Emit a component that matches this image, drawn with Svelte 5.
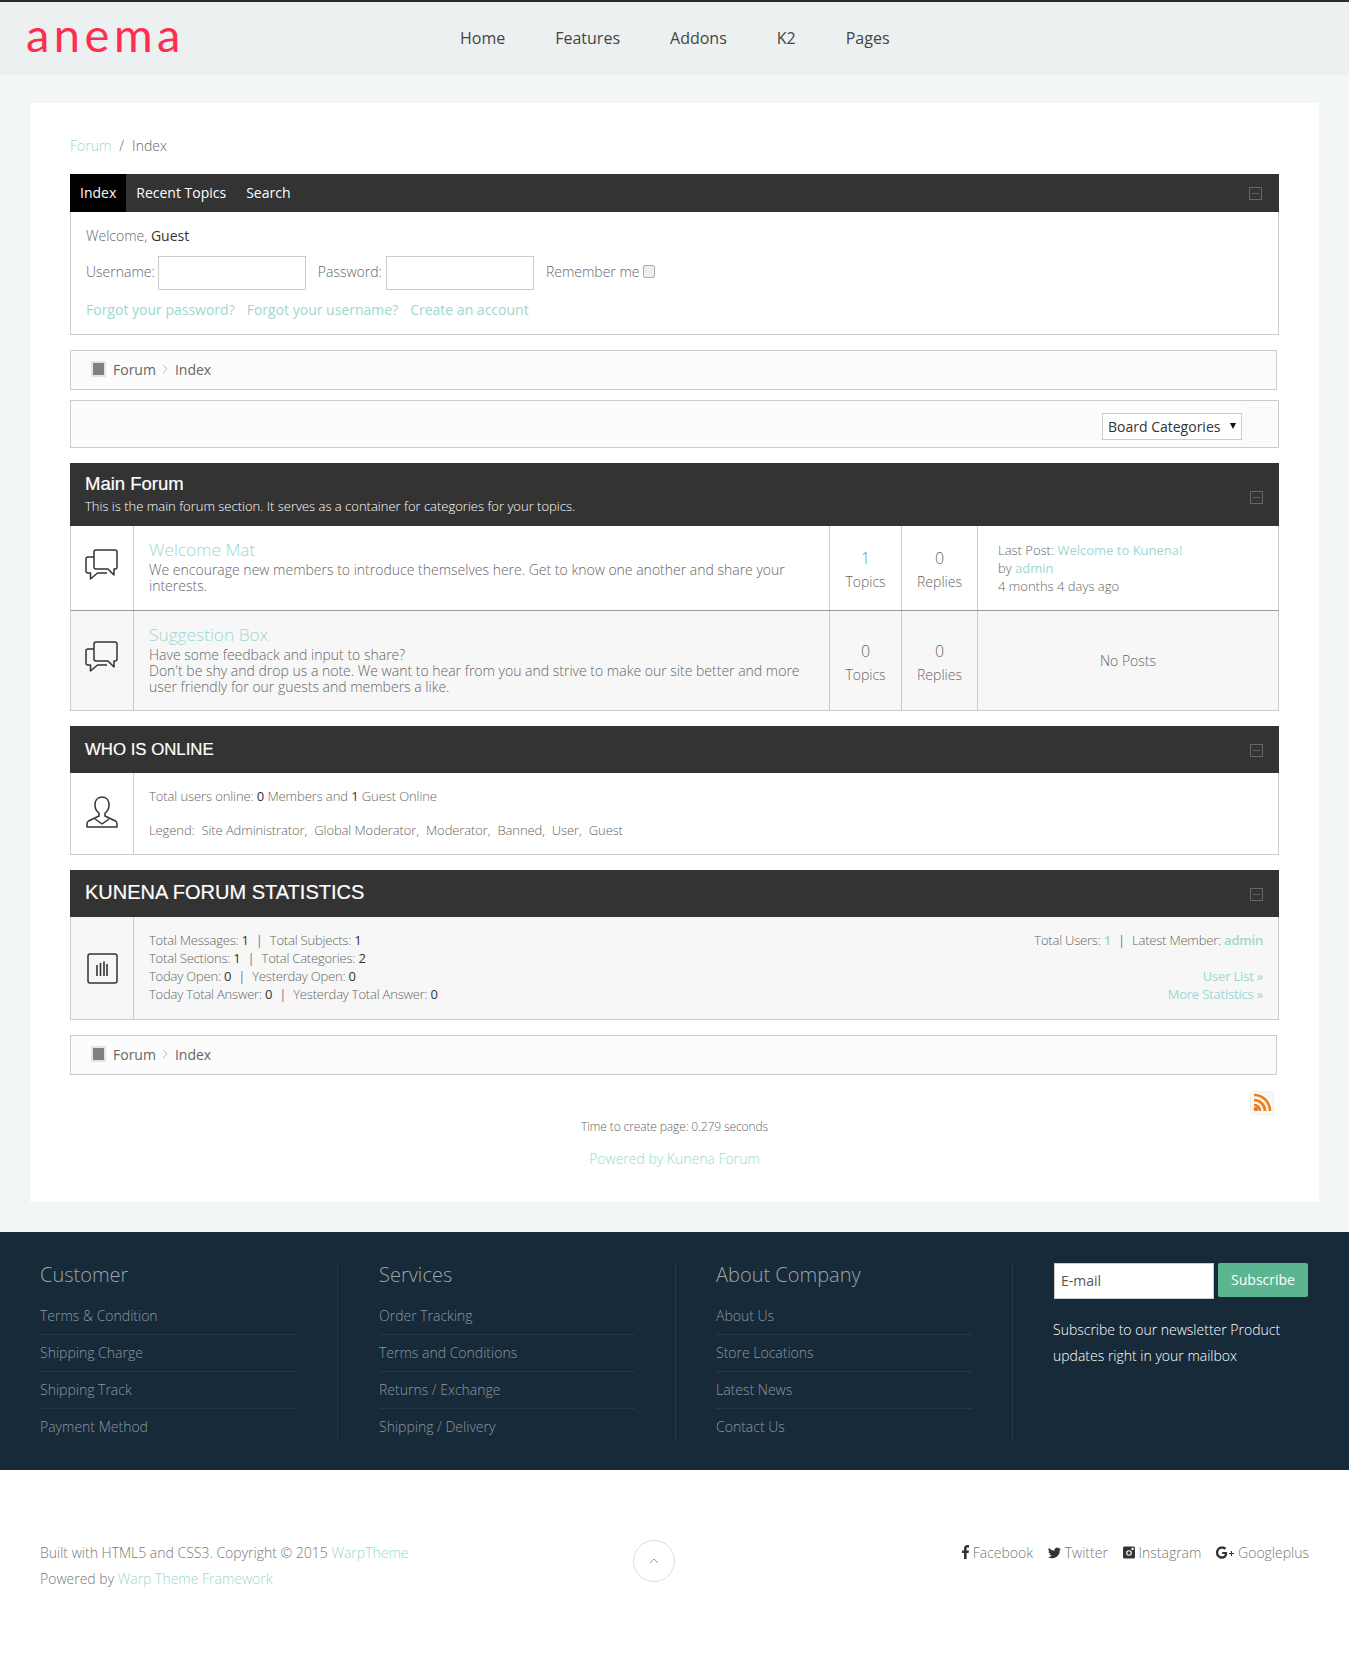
<script lang="ts">
	const nav = ['Home', 'Features', 'Addons', 'K2', 'Pages'];

	const columns = [
		{ title: 'Customer', links: ['Terms & Condition', 'Shipping Charge', 'Shipping Track', 'Payment Method'] },
		{ title: 'Services', links: ['Order Tracking', 'Terms and Conditions', 'Returns / Exchange', 'Shipping / Delivery'] },
		{ title: 'About Company', links: ['About Us', 'Store Locations', 'Latest News', 'Contact Us'] }
	];

	const legend = ['Site Administrator', 'Global Moderator', 'Moderator', 'Banned', 'User', 'Guest'];

	const stats = [
		[['Total Messages', '1'], ['Total Subjects', '1']],
		[['Total Sections', '1'], ['Total Categories', '2']],
		[['Today Open', '0'], ['Yesterday Open', '0']],
		[['Today Total Answer', '0'], ['Yesterday Total Answer', '0']]
	];
</script>

{#snippet collapse()}
	<span class="collapse"></span>
{/snippet}

{#snippet crumbs()}
	<div class="crumbs">
		<span class="crumb-icon"></span>
		<span>Forum</span>
		<svg class="crumb-sep" width="6" height="10" viewBox="0 0 6 10"><path d="M1 1l4 4-4 4" fill="none" stroke="#bbb" /></svg>
		<span>Index</span>
	</div>
{/snippet}

{#snippet chat()}
	<svg class="chat" width="33" height="31" viewBox="0 0 33 31" fill="none" stroke="#333" stroke-width="1.5" stroke-linejoin="round">
		<path d="M11 1h19a2 2 0 0 1 2 2v15a2 2 0 0 1-2 2h-1v6l-6-6H11a2 2 0 0 1-2-2V3a2 2 0 0 1 2-2z" />
		<path d="M9 8H3a2 2 0 0 0-2 2v12a2 2 0 0 0 2 2h2.500v6l7-6H22" />
	</svg>
{/snippet}

<header class="top">
	<div class="logo">anema</div>
	<nav>
		{#each nav as item}
			<span>{item}</span>
		{/each}
	</nav>
</header>

<main class="wrap">
	<div class="box">
		<div class="path"><a href="#f">Forum</a><span class="slash">/</span><span>Index</span></div>

		<section class="panel login">
			<div class="tabs">
				<span class="tab active">Index</span>
				<span class="tab">Recent Topics</span>
				<span class="tab">Search</span>
				{@render collapse()}
			</div>
			<div class="login-body">
				<p>Welcome, <b>Guest</b></p>
				<div class="fields">
					<label for="u">Username:</label>
					<input id="u" type="text" />
					<label class="second" for="p">Password:</label>
					<input id="p" type="password" />
					<label class="second" for="r">Remember me</label>
					<input id="r" class="check" type="checkbox" />
				</div>
				<div class="login-links">
					<a href="#f">Forgot your password?</a>
					<a href="#f">Forgot your username?</a>
					<a href="#f">Create an account</a>
				</div>
			</div>
		</section>

		{@render crumbs()}

		<div class="selector">
			<div class="select">Board Categories<span class="caret"></span></div>
			<span class="go"></span>
		</div>

		<section class="panel">
			<div class="bar bar-main">
				<div class="bar-text">
					<h2>Main Forum</h2>
					<p>This is the main forum section. It serves as a container for categories for your topics.</p>
				</div>
				{@render collapse()}
			</div>
			<div class="row">
				<div class="cell-icon">{@render chat()}</div>
				<div class="cell-main">
					<a class="cat" href="#f">Welcome Mat</a>
					<p>We encourage new members to introduce themselves here. Get to know one another and share your interests.</p>
				</div>
				<div class="cell-num"><strong class="num teal">1</strong><span>Topics</span></div>
				<div class="cell-num"><strong class="num">0</strong><span>Replies</span></div>
				<div class="cell-last">
					<div>Last Post: <a href="#f">Welcome to Kunena!</a></div>
					<div>by <a href="#f">admin</a></div>
					<div>4 months 4 days ago</div>
				</div>
			</div>
			<div class="row alt">
				<div class="cell-icon">{@render chat()}</div>
				<div class="cell-main">
					<a class="cat" href="#f">Suggestion Box</a>
					<p>Have some feedback and input to share?<br />Don't be shy and drop us a note. We want to hear from you and strive to make our site better and more user friendly for our guests and members a like.</p>
				</div>
				<div class="cell-num"><strong class="num">0</strong><span>Topics</span></div>
				<div class="cell-num"><strong class="num">0</strong><span>Replies</span></div>
				<div class="cell-last none">No Posts</div>
			</div>
		</section>

		<section class="panel">
			<div class="bar bar-small">
				<h2>WHO IS ONLINE</h2>
				{@render collapse()}
			</div>
			<div class="row simple">
				<div class="cell-icon">
					<svg class="user" width="32" height="32" viewBox="0 0 32 32" fill="none" stroke="#333" stroke-width="1.5" stroke-linejoin="round">
						<path d="M16 1c-5 0-7 4-7 8 0 3 1 6 4 8v3L2.500 25q-1.500 1-1.500 3v3h30v-3q0-2-1.500-3L19 20v-3c3-2 4-5 4-8 0-4-2-8-7-8z" />
						<path d="M9 23l7 5 7-5" />
					</svg>
				</div>
				<div class="online">
					<div>Total users online: <b>0</b> Members and <b>1</b> Guest Online</div>
					<div class="legend">
						<span>Legend:</span>
						{#each legend as name, i}
							<span>{name}{i < legend.length - 1 ? ',' : ''}</span>
						{/each}
					</div>
				</div>
			</div>
		</section>

		<section class="panel">
			<div class="bar bar-small">
				<h2 class="big">KUNENA FORUM STATISTICS</h2>
				{@render collapse()}
			</div>
			<div class="row simple alt">
				<div class="cell-icon">
					<svg width="31" height="31" viewBox="0 0 31 31">
						<rect x="1" y="1" width="29" height="29" rx="2" fill="none" stroke="#333" stroke-width="1.500" />
						<path d="M10 12v11M13.500 10v13M17 8.500v14.500M20 11v12" stroke="#333" stroke-width="1.600" />
					</svg>
				</div>
				<div class="stats">
					<div>
						{#each stats as line}
							<div>
								{line[0][0]}: <b>{line[0][1]}</b><span class="pipe">|</span>{line[1][0]}: <b>{line[1][1]}</b>
							</div>
						{/each}
					</div>
					<div class="stats-right">
						<div>Total Users: <a class="member" href="#f">1</a><span class="pipe">|</span>Latest Member: <a class="member" href="#f">admin</a></div>
						<div class="spacer"></div>
						<div><a href="#f">User List »</a></div>
						<div><a href="#f">More Statistics »</a></div>
					</div>
				</div>
			</div>
		</section>

		{@render crumbs()}

		<div class="rss">
			<svg width="24" height="24" viewBox="0 0 24 24">
				<rect x=".5" y=".5" width="23" height="23" rx="3" fill="#f8f8f8" stroke="#eee" />
				<g fill="none" stroke="#f57c14" stroke-width="2.600">
					<path d="M4 4c9 0 16 7 16 16" />
					<path d="M4 9c6 0 11 5 11 11" />
					<path d="M4 14c3.500 0 6 2.500 6 6" />
				</g>
				<circle cx="6" cy="18" r="2.300" fill="#f57c14" />
			</svg>
		</div>
		<div class="time">Time to create page: 0.279 seconds</div>
		<div class="powered"><a href="#f">Powered by Kunena Forum</a></div>
	</div>
</main>

<footer class="foot">
	{#each columns as col}
		<div class="foot-col">
			<h3>{col.title}</h3>
			<ul>
				{#each col.links as link}
					<li>{link}</li>
				{/each}
			</ul>
		</div>
	{/each}
	<div class="news">
		<div class="news-form">
			<input type="text" placeholder="E-mail" />
			<button>Subscribe</button>
		</div>
		<p>Subscribe to our newsletter Product updates right in your mailbox</p>
	</div>
</footer>

<div class="bottom">
	<div class="copy">
		<div>Built with HTML5 and CSS3. Copyright © 2015 <a href="#f">WarpTheme</a></div>
		<div>Powered by <a href="#f">Warp Theme Framework</a></div>
	</div>
	<div class="totop">
		<svg width="10" height="6" viewBox="0 0 10 6"><path d="M1 5l4-4 4 4" fill="none" stroke="#999" /></svg>
	</div>
	<div class="social">
		<span>
			<svg width="7" height="14" viewBox="0 0 7 14"><path d="M2 14V8H0V5.500h2V3.700C2 1.300 3.300 0 5.400 0H7v2.500H5.800c-.9 0-1.200.4-1.200 1.200v1.800H7L6.600 8h-2v6z" fill="#333" /></svg>
			Facebook
		</span>
		<span>
			<svg width="13" height="12" viewBox="0 0 24 20"><path d="M24 2.400a10 10 0 0 1-2.800.8A5 5 0 0 0 23.300.500a10 10 0 0 1-3.100 1.200A4.900 4.900 0 0 0 11.800 6 14 14 0 0 1 1.700 .900a4.900 4.900 0 0 0 1.500 6.600 4.900 4.900 0 0 1-2.200-.6c0 2.400 1.700 4.400 3.900 4.900a5 5 0 0 1-2.200.1 4.900 4.900 0 0 0 4.600 3.400A9.900 9.900 0 0 1 0 17.300 14 14 0 0 0 21.600 5q1.500-1.100 2.400-2.600z" fill="#333" /></svg>
			Twitter
		</span>
		<span>
			<svg width="12" height="13" viewBox="0 0 12 12"><rect width="12" height="12" rx="1.500" fill="#333" /><circle cx="6" cy="6.500" r="2.800" fill="#fff" /><circle cx="6" cy="6.500" r="1.700" fill="#333" /><rect x="8.500" y="1.300" width="2.200" height="2.200" fill="#fff" /></svg>
			Instagram
		</span>
		<span>
			<svg width="18" height="13" viewBox="0 0 18 13"><path d="M11 6H6.200v2H9a3 3 0 0 1-2.900 2.300A3.800 3.800 0 0 1 6.100 2.700c1 0 1.800.4 2.400 1l1.700-1.700A6.200 6.200 0 1 0 6.200 12.800c3.300 0 5-2.400 5-5.500z" fill="#333" /><path d="M15 5v2h-2v1h2v2h1V8h2V7h-2V5z" fill="#333" /></svg>
			Googleplus
		</span>
	</div>
</div>

<style>
	:global(body) {
		margin: 0;
		background: #fff;
		font-family: "Open Sans", sans-serif;
		font-weight: 300;
		font-size: 14px;
		color: #666;
	}

	a { color: #9cd8d1; text-decoration: none; font-weight: 400; }
	b { font-weight: 400; color: #333; }
	p { margin: 0; }

	.top {
		display: flex;
		align-items: center;
		height: 73px;
		border-top: 2px solid #2a2a2a;
		background: #ecf0f1;
		padding-left: 26px;
	}

	.logo {
		width: 434px;
		font-family: Lato, sans-serif;
		font-weight: 400;
		font-size: 47px;
		letter-spacing: 4.500px;
		line-height: 44px;
		color: #ff2d4f;
		margin-top: -9px;
	}

	nav { display: flex; gap: 50px; font-size: 16px; color: #444; font-weight: 400; padding-bottom: 2px; }

	.wrap {
		background: #f3f6f7;
		padding: 28px 30px 30px;
	}

	.box {
		background: #fff;
		padding: 33px 40px 33px;
		height: 1099px;
		box-sizing: border-box;
	}

	.path { line-height: 20px; margin-bottom: 18px; display: flex; }
	.path a { font-weight: 300; }
	.slash { margin: 0 8px; }

	.panel { margin-bottom: 15px; }

	.tabs {
		display: flex;
		align-items: center;
		height: 38px;
		background: #333;
		color: #fff;
		font-weight: 400;
		position: relative;
	}

	.tab { padding: 0 10px 0 10px; line-height: 38px; }
	.tab.active { background: #000; }

	.collapse {
		position: absolute;
		right: 16px;
		top: 50%;
		width: 11px;
		height: 11px;
		margin-top: -6px;
		border: 1px solid #666;
	}

	.tabs .collapse { right: 17px; }
	.bar-main .collapse { margin-top: -4px; }

	.collapse::after {
		content: "";
		position: absolute;
		left: 2px;
		right: 2px;
		top: 5px;
		height: 1px;
		background: #666;
	}

	.login-body {
		border: 1px solid #ccc;
		border-top: 0;
		height: 123px;
		padding: 0 15px;
		box-sizing: border-box;
	}

	.login-body p { padding-top: 14px; line-height: 20px; }

	.fields { display: flex; align-items: center; margin-top: 10px; height: 34px; }
	.fields label { margin: -3px 3px 0 0; }
	.fields label.second { margin-left: 12px; }
	.fields label.second:nth-of-type(2) { margin-right: 4px; }

	.fields input[type="text"], .fields input[type="password"] {
		width: 148px;
		height: 34px;
		box-sizing: border-box;
		border: 1px solid #ccc;
		background: #fff;
	}

	.check {
		appearance: none;
		box-sizing: border-box;
		margin: -3px 0 0 0;
		width: 12px;
		height: 13px;
		border: 1px solid #aaa;
		border-radius: 2px;
		background: #eee;
	}

	.login-links { display: flex; gap: 12px; margin-top: 10px; line-height: 20px; }

	.crumbs {
		display: flex;
		align-items: center;
		width: 1207px;
		height: 40px;
		box-sizing: border-box;
		border: 1px solid #ccc;
		background: #fcfcfc;
		padding: 0 0 2px 20px;
		font-weight: 400;
		color: #666;
	}

	.crumb-icon {
		width: 11px;
		height: 12px;
		background: #808080;
		border: 2px solid #e4e4e4;
		margin-right: 7px;
	}

	.crumb-sep { margin: 0 7px 0 6px; }

	.selector {
		display: flex;
		justify-content: flex-end;
		align-items: center;
		height: 48px;
		box-sizing: border-box;
		margin: 10px 0 15px;
		border: 1px solid #ccc;
		background: #fcfcfc;
		padding: 5px 5px 0 0;
	}

	.select {
		position: relative;
		width: 140px;
		height: 27px;
		box-sizing: border-box;
		border: 1px solid #ccc;
		background: #fff;
		padding-left: 5px;
		line-height: 25px;
		color: #333;
		font-weight: 400;
	}

	.caret {
		position: absolute;
		right: 5px;
		top: 9px;
		border: 3.500px solid transparent;
		border-top: 6px solid #111;
		border-bottom: 0;
	}

	.go {
		width: 25px;
		height: 33px;
		margin: -5px 0 0 4px;
		border: 1px solid #f8f8f8;
	}

	.bar {
		position: relative;
		background: #333;
		color: #fff;
		padding-left: 15px;
		display: flex;
		align-items: center;
		box-sizing: border-box;
	}

	.bar h2 {
		margin: 0;
		font-family: "Liberation Sans", Arial, sans-serif;
		font-weight: 400;
		font-size: 16.800px;
		-webkit-text-stroke: 0.2px #fff;
	}

	.bar-main { height: 63px; }
	.bar-text { margin-top: -2px; }
	.bar-main h2 { font-size: 18.500px; line-height: 24px; }
	.bar-main p { font-size: 13px; font-weight: 300; line-height: 18px; margin-top: 1px; }
	.bar-small { height: 47px; }
	.bar h2.big { font-size: 20px; margin-top: -3px; }

	.row {
		display: grid;
		grid-template-columns: 63px 696px 72px 76px 1fr;
		border: 1px solid #ccc;
		border-top: 0;
		border-bottom-color: #999;
	}

	.row + .row { border-bottom-color: #ccc; }
	.row.alt { background: #f7f7f7; }
	.row.simple { grid-template-columns: 63px 1fr; border-bottom-color: #ccc; }

	.cell-icon {
		display: flex;
		align-items: center;
		justify-content: center;
		border-right: 1px solid #ccc;
	}

	.chat { margin: -8px 0 0 -1px; }
	.user { margin-top: -3px; }

	.cell-main {
		padding: 12px 15px 16px;
		border-right: 1px solid #ccc;
	}

	.alt .cell-main { padding: 12px 15px 15px; }

	.cat { display: block; font-size: 17.300px; font-weight: 300; line-height: 23px; }
	.cell-main p { line-height: 16px; margin-top: 1px; }

	.cell-num {
		display: flex;
		flex-direction: column;
		align-items: center;
		justify-content: center;
		padding-top: 4px;
		border-right: 1px solid #ccc;
		line-height: 23px;
	}

	.num { font-size: 16px; font-weight: 300; }
	.teal { color: #4a9fb0; }

	.cell-last {
		display: flex;
		flex-direction: column;
		justify-content: center;
		padding-left: 20px;
		font-size: 13px;
		line-height: 18px;
	}

	.cell-last.none {
		align-items: center;
		padding: 0;
		font-size: 14px;
	}

	.online { padding: 14px 15px 15px; font-size: 13px; line-height: 18px; letter-spacing: -.1px; }
	.legend { display: flex; gap: 7px; margin-top: 16px; }

	.stats {
		display: flex;
		justify-content: space-between;
		padding: 14px 15px 16px;
		font-size: 13px;
		line-height: 18px;
		letter-spacing: -.2px;
	}

	.stats-right { text-align: right; }
	.spacer { height: 18px; }
	.pipe { color: #777; margin: 0 7px; font-weight: 400; }
	.member { font-weight: 600; }

	.rss { display: flex; justify-content: flex-end; padding-right: 5px; margin-top: 16px; height: 24px; }

	.time { text-align: center; font-size: 12px; line-height: 18px; margin-top: 3px; letter-spacing: -.12px; }
	.powered { text-align: center; line-height: 20px; margin-top: 13px; }
	.powered a, .copy a { font-weight: 300; }

	.foot {
		display: grid;
		grid-template-columns: 338px 338px 337px 1fr;
		background: #162a39;
		height: 238px;
		box-sizing: border-box;
		padding-top: 30px;
		color: #8d99a2;
	}

	.foot-col {
		height: 178px;
		padding: 0 40px;
		border-right: 1px solid #1f3a4f;
		box-sizing: border-box;
	}

	.foot-col:nth-child(2) { padding-left: 41px; }

	.foot h3 {
		margin: 0;
		font-size: 20px;
		font-weight: 300;
		line-height: 26px;
		color: #9aa6ae;
	}

	.foot ul { list-style: none; margin: 10px 0 0; padding: 0; }

	.foot li {
		line-height: 36px;
		border-bottom: 1px solid #1f3a4f;
		height: 36px;
	}

	.foot li:last-child { border-bottom: 0; }

	.news { padding: 1px 0 0 40px; }
	.news-form { display: flex; gap: 4px; align-items: flex-start; margin-left: 1px; }

	.news-form input {
		width: 160px;
		height: 36px;
		box-sizing: border-box;
		border: 1px solid #ccc;
		background: #fff;
		padding: 0 6px 2px;
		font: 400 14px "Open Sans", sans-serif;
	}

	.news-form input::placeholder { color: #555; opacity: 1; }

	.news-form button {
		width: 90px;
		height: 34px;
		border: 0;
		border-radius: 2px;
		padding: 0 0 2px;
		background: #5bb591;
		color: #fff;
		font: 400 14px "Open Sans", sans-serif;
	}

	.news p {
		margin-top: 18px;
		width: 240px;
		line-height: 26px;
		color: #fff;
		font-weight: 300;
	}

	.bottom {
		display: grid;
		grid-template-columns: 593px 42px 1fr;
		height: 202px;
		box-sizing: border-box;
		padding: 70px 40px 0;
		color: #777;
	}

	.copy { line-height: 26px; }

	.totop {
		display: flex;
		align-items: center;
		justify-content: center;
		width: 40px;
		height: 40px;
		border: 1px solid #ddd;
		border-radius: 50%;
	}

	.social { display: flex; justify-content: flex-end; gap: 15px; line-height: 26px; }
	.social svg { vertical-align: -1px; }
</style>
